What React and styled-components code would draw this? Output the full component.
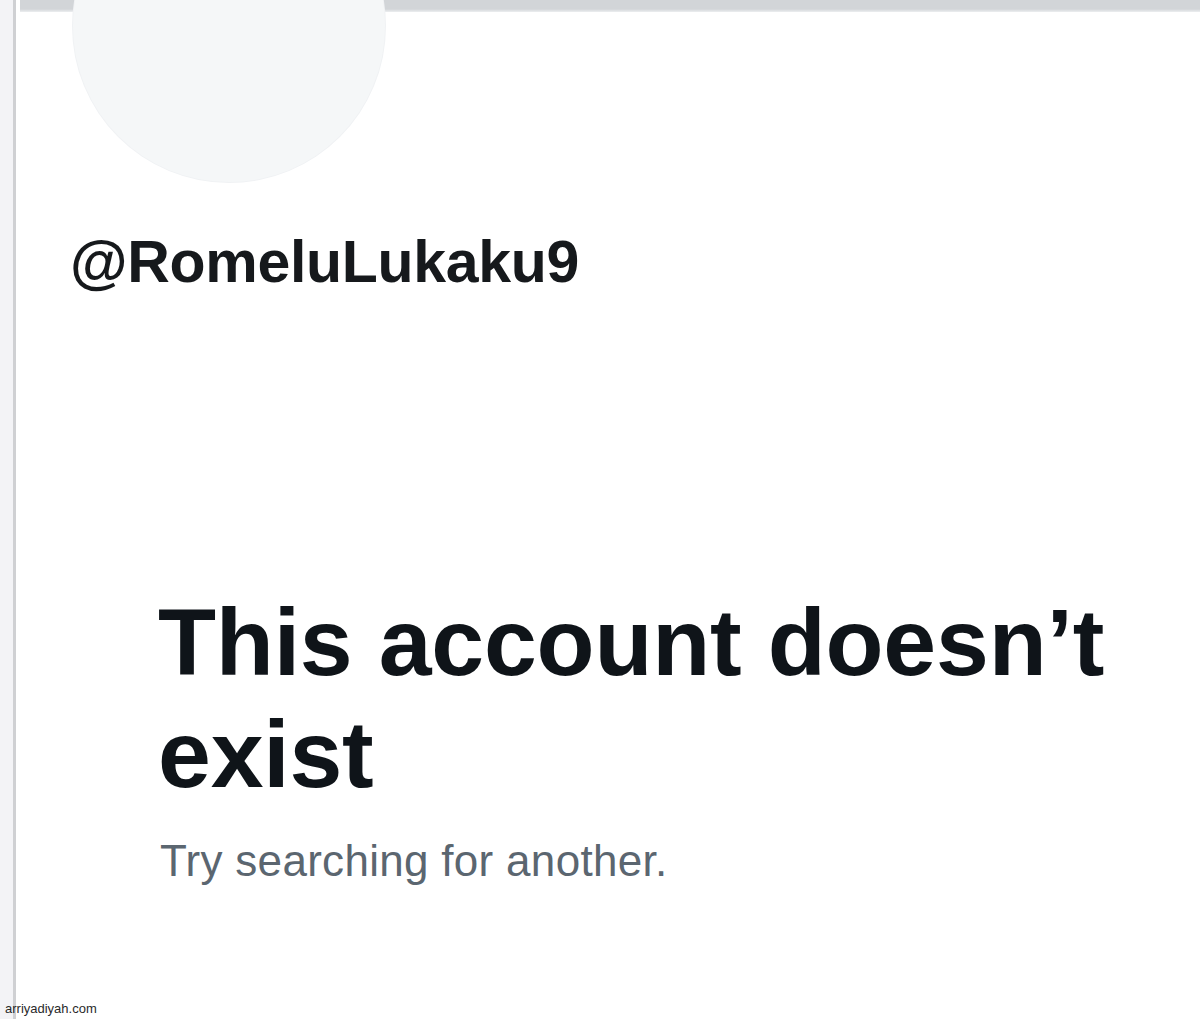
import React from "react";
import styled, { createGlobalStyle } from "styled-components";

const GlobalStyle = createGlobalStyle`
  html, body {
    margin: 0;
    padding: 0;
    background: #ffffff;
    overflow: hidden;
  }
  body {
    font-family: "Liberation Sans", Arial, sans-serif;
  }
`;

const Page = styled.div`
  position: relative;
  display: flex;
  width: 1200px;
  height: 1019px;
  background: #ffffff;
  overflow: hidden;
`;

const SideRail = styled.div`
  flex: 0 0 13px;
  background: #f3f3f6;
  border-right: 3px solid #cfd0d3;
`;

const Profile = styled.main`
  flex: 1;
  display: flex;
  flex-direction: column;
`;

const Banner = styled.div`
  height: 12px;
  margin-left: 4px;
  background: linear-gradient(#d2d5d8 0, #d2d5d8 9px, #eceef0 12px);
`;

const Avatar = styled.div`
  position: relative;
  z-index: 1;
  width: 312px;
  height: 312px;
  margin: -142px 0 0 57px;
  border-radius: 50%;
  background: #f5f7f8;
  box-shadow: 0 0 0 1px #f0f2f4;
`;

const Handle = styled.div`
  margin: 51px 0 0 54px;
  font-size: 59px;
  line-height: 1;
  font-weight: 700;
  letter-spacing: -0.3px;
  color: #16191c;
`;

const Notice = styled.section`
  display: flex;
  flex-direction: column;
  margin: 294px 0 0 142px;
`;

const Title = styled.h1`
  margin: 0;
  font-size: 95px;
  line-height: 112px;
  font-weight: 700;
  letter-spacing: -0.2px;
  color: #0f1419;
`;

const Hint = styled.p`
  margin: 25px 0 0 2px;
  font-size: 44px;
  line-height: 1.2;
  font-weight: 400;
  letter-spacing: 0.3px;
  color: #5b6670;
`;

const Watermark = styled.span`
  position: absolute;
  left: 5px;
  bottom: 3px;
  font-family: "Liberation Sans", Arial, sans-serif;
  font-size: 13px;
  color: #2a2a2a;
`;

export default function App() {
  return (
    <Page>
      <GlobalStyle />
      <SideRail />
      <Profile>
        <Banner />
        <Avatar />
        <Handle>@RomeluLukaku9</Handle>
        <Notice>
          <Title>
            This account doesn’t
            <br />
            exist
          </Title>
          <Hint>Try searching for another.</Hint>
        </Notice>
      </Profile>
      <Watermark>arriyadiyah.com</Watermark>
    </Page>
  );
}
